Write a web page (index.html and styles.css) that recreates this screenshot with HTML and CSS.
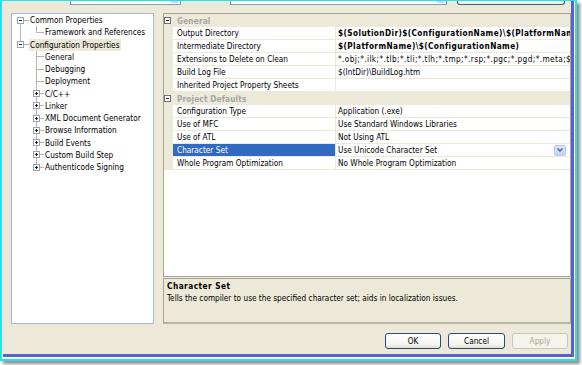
FILE: index.html
```html
<!DOCTYPE html>
<html>
<head>
<meta charset="utf-8">
<link rel="stylesheet" href="styles.css">
</head>
<body>
<div class="frame">
 <div class="win">
  <div class="content">
   <div class="topstrip">
    <div class="combo c1"><span class="cbtn"></span></div>
    <div class="combo c2"><span class="cbtn"></span></div>
    <div class="topbtn"></div>
   </div>
   <div class="main">
    <div class="tree">
     <div class="trow top first"><span class="tbox minus"></span><span class="tlabel">Common Properties</span></div>
     <div class="trow child thru lastchild"><span class="tlabel">Framework and References</span></div>
     <div class="trow top second"><span class="tbox minus"></span><span class="tlabel sel">Configuration Properties</span></div>
     <div class="trow child"><span class="tlabel">General</span></div>
     <div class="trow child"><span class="tlabel">Debugging</span></div>
     <div class="trow child"><span class="tlabel">Deployment</span></div>
     <div class="trow child box"><span class="tbox plus"></span><span class="tlabel">C/C++</span></div>
     <div class="trow child box"><span class="tbox plus"></span><span class="tlabel">Linker</span></div>
     <div class="trow child box"><span class="tbox plus"></span><span class="tlabel">XML Document Generator</span></div>
     <div class="trow child box"><span class="tbox plus"></span><span class="tlabel">Browse Information</span></div>
     <div class="trow child box"><span class="tbox plus"></span><span class="tlabel">Build Events</span></div>
     <div class="trow child box"><span class="tbox plus"></span><span class="tlabel">Custom Build Step</span></div>
     <div class="trow child box lastchild"><span class="tbox plus"></span><span class="tlabel">Authenticode Signing</span></div>
    </div>
    <div class="right">
     <div class="grid">
      <div class="pcat"><span class="tbox minus dark"></span><span class="catlabel">General</span></div>
      <div class="prow"><div class="pname">Output Directory</div><div class="pval b">$(SolutionDir)$(ConfigurationName)\$(PlatformName)</div></div>
      <div class="prow"><div class="pname">Intermediate Directory</div><div class="pval b">$(PlatformName)\$(ConfigurationName)</div></div>
      <div class="prow"><div class="pname">Extensions to Delete on Clean</div><div class="pval wide">*.obj;*.ilk;*.tlb;*.tli;*.tlh;*.tmp;*.rsp;*.pgc;*.pgd;*.meta;$(TargetPath)</div></div>
      <div class="prow"><div class="pname">Build Log File</div><div class="pval">$(IntDir)\BuildLog.htm</div></div>
      <div class="prow"><div class="pname">Inherited Project Property Sheets</div><div class="pval"></div></div>
      <div class="pcat"><span class="tbox minus dark"></span><span class="catlabel">Project Defaults</span></div>
      <div class="prow"><div class="pname">Configuration Type</div><div class="pval">Application (.exe)</div></div>
      <div class="prow"><div class="pname">Use of MFC</div><div class="pval">Use Standard Windows Libraries</div></div>
      <div class="prow"><div class="pname">Use of ATL</div><div class="pval">Not Using ATL</div></div>
      <div class="prow"><div class="pname selrow">Character Set</div><div class="pval"><span class="vtext">Use Unicode Character Set</span><span class="ddbtn"><svg width="6" height="4" viewBox="0 0 6 4"><path d="M0.5 0.5 L3 3 L5.5 0.5" fill="none" stroke="#4d6185" stroke-width="1.3"/></svg></span></div></div>
      <div class="prow"><div class="pname">Whole Program Optimization</div><div class="pval">No Whole Program Optimization</div></div>
     </div>
     <div class="desc">
      <div class="dtitle">Character Set</div>
      <div class="dtext">Tells the compiler to use the specified character set; aids in localization issues.</div>
     </div>
    </div>
   </div>
   <div class="buttons">
    <div class="btn">OK</div>
    <div class="btn cancel">Cancel</div>
    <div class="btn disabled">Apply</div>
   </div>
  </div>
 </div>
</div>
</body>
</html>
```
FILE: styles.css
```css
html, body {
  margin: 0;
  padding: 0;
  background: #ffffff;
}
body {
  font-family: "DejaVu Sans Condensed", "DejaVu Sans", sans-serif;
  font-stretch: condensed;
  font-size: 8.2px;
  color: #000;
  width: 582px;
  height: 365px;
  overflow: hidden;
}
.frame {
  width: 577px;
  height: 361px;
  box-sizing: border-box;
  border-style: solid;
  border-color: #22e2f0;
  border-width: 1px 2px 2px 2px;
  box-shadow: 3px 3px 3px rgba(0,0,0,0.45);
}
.win {
  height: 100%;
  box-sizing: border-box;
  border-style: solid;
  border-color: #ffffff;
  border-width: 0 1px 2px 1px;
}
.content {
  height: 100%;
  box-sizing: border-box;
  background: #ece9d8;
  border-right: 3px solid #5b5ed9;
  border-bottom: 3px solid #5b5ed9;
  display: flex;
  flex-direction: column;
}
.topstrip {
  height: 5px;
  display: flex;
  align-items: flex-start;
}
.combo {
  height: 4px;
  box-sizing: border-box;
  background: #fff;
  border: 1px solid #7f9db9;
  border-top: none;
  display: flex;
  justify-content: flex-end;
  padding: 0 1px 1px 0;
}
.c1 { margin-left: 67px; width: 111px; }
.c2 { margin-left: 49px; width: 217px; }
.cbtn {
  width: 9px;
  height: 100%;
  background: #c6d3f7;
  border-radius: 0 0 2px 2px;
}
.topbtn {
  margin-left: 10px;
  width: 108px;
  height: 4px;
  box-sizing: border-box;
  border: 1px solid #4a5f80;
  border-top: none;
  border-radius: 0 0 3px 3px;
  background: #f1efe6;
}
.main {
  margin-top: 7px;
  height: 311px;
  display: flex;
  padding-left: 8px;
  gap: 9px;
}
.tree {
  width: 143px;
  height: 311px;
  box-sizing: border-box;
  border: 1px solid #a5b9d3;
  background: #fff;
}
.trow {
  height: 12.25px;
  display: flex;
  align-items: center;
  white-space: nowrap;
  background-repeat: no-repeat;
}
.tbox {
  width: 5px;
  height: 5px;
  border: 1px solid #93a4b4;
  background-color: #fff;
  background-repeat: no-repeat;
  flex: none;
}
.tbox.minus {
  background-image: linear-gradient(#222, #222);
  background-position: center;
  background-size: 3px 1px;
}
.tbox.plus {
  background-image: linear-gradient(#222, #222), linear-gradient(#222, #222);
  background-position: center, center;
  background-size: 3px 1px, 1px 3px;
}
.tbox.dark {
  border-color: #6f6f6f;
}
.tlabel {
  padding: 0 1px;
  line-height: 12px;
}
.tlabel.sel {
  background: #ece9d8;
}
.trow.top .tbox { margin-left: 5px; }
.trow.top .tlabel { margin-left: 5px; }
.trow.top.first {
  background-image: linear-gradient(#b4b4b4, #b4b4b4), linear-gradient(#b4b4b4, #b4b4b4);
  background-position: 8px 100%, 12px 50%;
  background-size: 1px 50%, 5px 1px;
}
.trow.top.second {
  background-image: linear-gradient(#b4b4b4, #b4b4b4), linear-gradient(#b4b4b4, #b4b4b4);
  background-position: 8px 0, 12px 50%;
  background-size: 1px 50%, 5px 1px;
}
.trow.child .tlabel { margin-left: 32px; }
.trow.child.box .tbox { margin-left: 21px; }
.trow.child.box .tlabel { margin-left: 4px; }
.trow.child {
  background-image: linear-gradient(#b4b4b4, #b4b4b4), linear-gradient(#b4b4b4, #b4b4b4);
  background-position: 24px 0, 24px 50%;
  background-size: 1px 100%, 8px 1px;
}
.trow.child.lastchild {
  background-size: 1px 50%, 8px 1px;
}
.trow.child.thru {
  background-image: linear-gradient(#b4b4b4, #b4b4b4), linear-gradient(#b4b4b4, #b4b4b4), linear-gradient(#b4b4b4, #b4b4b4);
  background-position: 24px 0, 24px 50%, 8px 0;
  background-size: 1px 50%, 8px 1px, 1px 100%;
}
.right {
  width: 408px;
  display: flex;
  flex-direction: column;
  gap: 1px;
}
.grid {
  height: 264px;
  box-sizing: border-box;
  border: 1px solid #a9a593;
  background: #fff;
  overflow: hidden;
}
.pcat {
  height: 13px;
  background: #ece9d8;
  display: flex;
  align-items: center;
}
.pcat .tbox { margin-left: 0; }
.catlabel {
  margin-left: 6px;
  font-weight: bold;
  color: #a6a6a6;
  white-space: nowrap;
  letter-spacing: 0.15px;
}
.prow {
  height: 13px;
  display: flex;
  background: #ece9d8;
}
.pname {
  margin-left: 9px;
  width: 162px;
  height: 12px;
  box-sizing: border-box;
  padding-left: 4px;
  line-height: 12px;
  background: #fff;
  white-space: nowrap;
  overflow: hidden;
}
.pname.selrow {
  background: #316ac5;
  color: #fff;
}
.pval {
  margin-left: 1px;
  flex: 1;
  min-width: 0;
  height: 12px;
  box-sizing: border-box;
  padding-left: 2px;
  line-height: 12px;
  background: #fff;
  white-space: nowrap;
  overflow: hidden;
  display: flex;
  align-items: center;
}
.pval.b {
  font-weight: bold;
  letter-spacing: 0.4px;
}
.pval.wide {
  letter-spacing: 0.4px;
}
.ddbtn {
  margin-left: auto;
  margin-right: 4px;
  width: 12px;
  height: 11px;
  box-sizing: border-box;
  border: 1px solid #b9c9ef;
  border-radius: 2px;
  background: linear-gradient(#dce6fd, #c2d3fa);
  display: flex;
  align-items: center;
  justify-content: center;
  flex: none;
}
.desc {
  height: 46px;
  box-sizing: border-box;
  border: 1px solid #a9a593;
  border-bottom: 2px solid #b8b4a2;
  padding: 2px 3px 0 3px;
  line-height: 11.5px;
  background: #ece9d8;
}
.dtitle {
  font-weight: bold;
  letter-spacing: 0.5px;
}
.buttons {
  margin-top: 9px;
  height: 16px;
  display: flex;
  justify-content: flex-end;
  gap: 7px;
  padding-right: 3px;
}
.btn {
  width: 56px;
  height: 16px;
  box-sizing: border-box;
  border: 1px solid #2b4a75;
  border-radius: 3px;
  background: linear-gradient(#ffffff, #f3f2ec 80%, #dcd8cc);
  display: flex;
  align-items: center;
  justify-content: center;
}
.btn.cancel { width: 57px; }
.btn.disabled {
  border-color: #cac8bb;
  background: #f5f4ea;
  color: #aca899;
}
```
